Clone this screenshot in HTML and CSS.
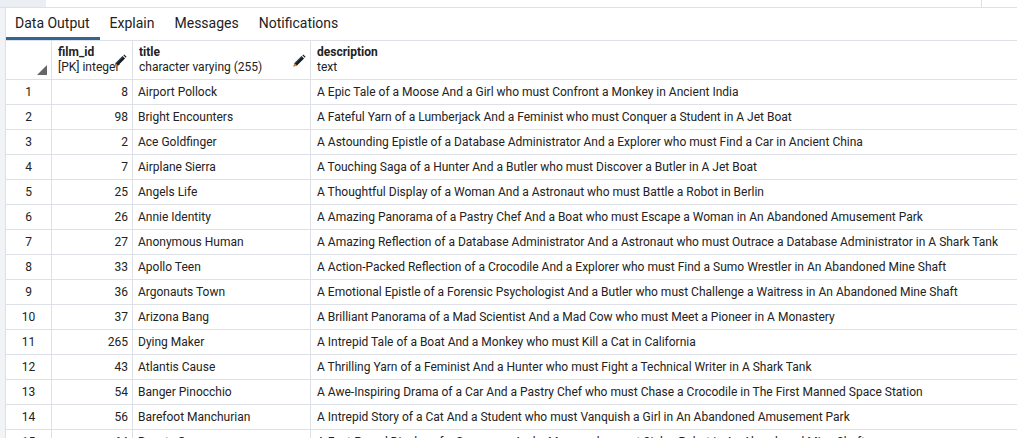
FILE: index.html
```html
<!DOCTYPE html>
<html>
<head>
<meta charset="utf-8">
<link rel="stylesheet" href="styles.css">
</head>
<body>
<div class="topbar">
  <div class="topbar-block"></div>
  <div class="topbar-fill"></div>
  <div class="topbar-split"></div>
</div>
<div class="main">
  <div class="leftstrip"></div>
  <div class="panel">
    <div class="tabs">
      <div class="tab active">Data Output</div>
      <div class="tab">Explain</div>
      <div class="tab">Messages</div>
      <div class="tab">Notifications</div>
    </div>
    <div class="grid">
      <div class="row head">
        <div class="cell corner"><span class="tri"></span></div>
        <div class="cell hcell">
          <div class="hname">film_id</div>
          <div class="htype">[PK] integer</div>
          <svg class="pencil pencil-id" viewBox="0 0 14 14" width="14" height="14"><path d="M1.5 12.5 L2.5 9 L9.5 2 L12 4.5 L5 11.5 Z" fill="#1a1a1a"/><path d="M10.3 1.2 L11.2 0.5 L13.5 2.8 L12.8 3.7 Z" fill="#1a1a1a"/><path d="M1.5 12.5 L2.5 9 L5 11.5 Z" fill="#d9822b"/><path d="M3 9.5 L9.8 2.7" stroke="#3b7fd0" stroke-width="0.7"/></svg>
        </div>
        <div class="cell hcell">
          <div class="hname">title</div>
          <div class="htype">character varying (255)</div>
          <svg class="pencil" viewBox="0 0 14 14" width="14" height="14"><path d="M1.5 12.5 L2.5 9 L9.5 2 L12 4.5 L5 11.5 Z" fill="#1a1a1a"/><path d="M10.3 1.2 L11.2 0.5 L13.5 2.8 L12.8 3.7 Z" fill="#1a1a1a"/><path d="M1.5 12.5 L2.5 9 L5 11.5 Z" fill="#d9822b"/><path d="M3 9.5 L9.8 2.7" stroke="#3b7fd0" stroke-width="0.7"/></svg>
        </div>
        <div class="cell hcell">
          <div class="hname">description</div>
          <div class="htype">text</div>
        </div>
      </div>
      <div class="row"><div class="cell num">1</div><div class="cell id">8</div><div class="cell txt">Airport Pollock</div><div class="cell txt">A Epic Tale of a Moose And a Girl who must Confront a Monkey in Ancient India</div></div>
      <div class="row"><div class="cell num">2</div><div class="cell id">98</div><div class="cell txt">Bright Encounters</div><div class="cell txt">A Fateful Yarn of a Lumberjack And a Feminist who must Conquer a Student in A Jet Boat</div></div>
      <div class="row"><div class="cell num">3</div><div class="cell id">2</div><div class="cell txt">Ace Goldfinger</div><div class="cell txt">A Astounding Epistle of a Database Administrator And a Explorer who must Find a Car in Ancient China</div></div>
      <div class="row"><div class="cell num">4</div><div class="cell id">7</div><div class="cell txt">Airplane Sierra</div><div class="cell txt">A Touching Saga of a Hunter And a Butler who must Discover a Butler in A Jet Boat</div></div>
      <div class="row"><div class="cell num">5</div><div class="cell id">25</div><div class="cell txt">Angels Life</div><div class="cell txt">A Thoughtful Display of a Woman And a Astronaut who must Battle a Robot in Berlin</div></div>
      <div class="row"><div class="cell num">6</div><div class="cell id">26</div><div class="cell txt">Annie Identity</div><div class="cell txt">A Amazing Panorama of a Pastry Chef And a Boat who must Escape a Woman in An Abandoned Amusement Park</div></div>
      <div class="row"><div class="cell num">7</div><div class="cell id">27</div><div class="cell txt">Anonymous Human</div><div class="cell txt">A Amazing Reflection of a Database Administrator And a Astronaut who must Outrace a Database Administrator in A Shark Tank</div></div>
      <div class="row"><div class="cell num">8</div><div class="cell id">33</div><div class="cell txt">Apollo Teen</div><div class="cell txt">A Action-Packed Reflection of a Crocodile And a Explorer who must Find a Sumo Wrestler in An Abandoned Mine Shaft</div></div>
      <div class="row"><div class="cell num">9</div><div class="cell id">36</div><div class="cell txt">Argonauts Town</div><div class="cell txt">A Emotional Epistle of a Forensic Psychologist And a Butler who must Challenge a Waitress in An Abandoned Mine Shaft</div></div>
      <div class="row"><div class="cell num">10</div><div class="cell id">37</div><div class="cell txt">Arizona Bang</div><div class="cell txt">A Brilliant Panorama of a Mad Scientist And a Mad Cow who must Meet a Pioneer in A Monastery</div></div>
      <div class="row"><div class="cell num">11</div><div class="cell id">265</div><div class="cell txt">Dying Maker</div><div class="cell txt">A Intrepid Tale of a Boat And a Monkey who must Kill a Cat in California</div></div>
      <div class="row"><div class="cell num">12</div><div class="cell id">43</div><div class="cell txt">Atlantis Cause</div><div class="cell txt">A Thrilling Yarn of a Feminist And a Hunter who must Fight a Technical Writer in A Shark Tank</div></div>
      <div class="row"><div class="cell num">13</div><div class="cell id">54</div><div class="cell txt">Banger Pinocchio</div><div class="cell txt">A Awe-Inspiring Drama of a Car And a Pastry Chef who must Chase a Crocodile in The First Manned Space Station</div></div>
      <div class="row"><div class="cell num">14</div><div class="cell id">56</div><div class="cell txt">Barefoot Manchurian</div><div class="cell txt">A Intrepid Story of a Cat And a Student who must Vanquish a Girl in An Abandoned Amusement Park</div></div>
      <div class="row"><div class="cell num">15</div><div class="cell id">64</div><div class="cell txt">Beauty Grease</div><div class="cell txt">A Fast-Paced Display of a Composer And a Moose who must Sink a Robot in An Abandoned Mine Shaft</div></div>
    </div>
  </div>
</div>
</body>
</html>
```

FILE: styles.css
```css
* { box-sizing: border-box; }
html, body { margin: 0; padding: 0; background: #ffffff; }
body {
  width: 1017px;
  height: 438px;
  overflow: hidden;
  font-family: Roboto, "Liberation Sans", sans-serif;
  color: #222222;
}
.topbar {
  display: flex;
  height: 8px;
  border-bottom: 1px solid #dde0e6;
}
.topbar-block { width: 46px; background: #ebeef3; }
.topbar-fill { width: 936px; border-right: 1px solid #dde0e6; }
.topbar-split { flex: 1; }
.main { display: flex; height: 430px; }
.leftstrip {
  width: 6px;
  background: #f1f3f6;
  border-right: 1px solid #dde0e6;
}
.panel { flex: 1; min-width: 0; overflow: hidden; }
.tabs {
  display: flex;
  height: 32px;
}
.tab {
  font-size: 14px;
  line-height: 28px;
  padding: 1px 10px 0 9px;
  margin-right: 1px;
  border-bottom: 3px solid transparent;
  color: #222222;
}
.tab.active { border-bottom-color: #326690; }
.grid { border-top: 1px solid #dde0e6; }
.row {
  display: grid;
  grid-template-columns: 46px 81px 178px 1fr;
  height: 25px;
  border-bottom: 1px solid #dde0e6;
  font-size: 12px;
  white-space: nowrap;
}
.row.head { height: 39px; }
.cell {
  border-right: 1px solid #dde0e6;
  overflow: hidden;
  line-height: 24px;
  position: relative;
}
.cell:last-child { border-right: none; }
.num { text-align: center; }
.id { text-align: right; padding-right: 4px; }
.txt { padding-left: 5px; }
.cell.txt:last-child { padding-left: 6px; }
.hcell { padding: 4px 6px 0 6px; line-height: 15px; }
.hname { font-weight: bold; }
.pencil { position: absolute; right: 4px; top: 13px; }
.pencil-id { right: 5px; }
.corner .tri {
  position: absolute;
  right: 4px;
  bottom: 4px;
  width: 0;
  height: 0;
  border-left: 10px solid transparent;
  border-bottom: 10px solid #666666;
}
```
